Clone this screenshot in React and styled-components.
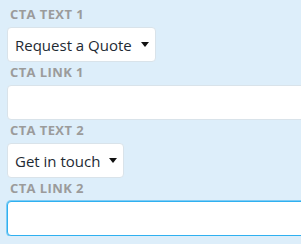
import React from "react";
import styled, { createGlobalStyle } from "styled-components";

const Global = createGlobalStyle`
  html, body {
    margin: 0;
    padding: 0;
    background: #ddeefa;
    overflow: hidden;
  }
  body {
    font-family: "Open Sans", "Noto Sans", sans-serif;
  }
`;

export default function App() {
  return (
    <Wrapper>
      <Global />
      <Field>
        <Label>CTA Text 1</Label>
        <Select>
          <span>Request a Quote</span>
          <Caret />
        </Select>
      </Field>
      <Field>
        <Label>CTA Link 1</Label>
        <Input />
      </Field>
      <Field>
        <Label>CTA Text 2</Label>
        <Select>
          <span>Get in touch</span>
          <Caret />
        </Select>
      </Field>
      <Field>
        <Label>CTA Link 2</Label>
        <Input focused />
      </Field>
    </Wrapper>
  );
}

const Wrapper = styled.div`
  width: 340px;
  padding: 6px 0 0 7px;
  display: flex;
  flex-direction: column;
  gap: 2px;
`;
const Field = styled.div`
  display: flex;
  flex-direction: column;
  align-items: flex-start;
`;
const Label = styled.label`
  font-size: 13px;
  font-weight: 700;
  line-height: 17px;
  letter-spacing: 0.4px;
  color: #9b9b9b;
  text-transform: uppercase;
  padding-left: 3px;
  margin-bottom: 4px;
`;
const Select = styled.div`
  display: inline-flex;
  align-items: center;
  gap: 9px;
  height: 35px;
  box-sizing: border-box;
  padding: 0 6px 0 7px;
  background: #fff;
  border: 1px solid #d9e3ea;
  border-radius: 4px;
  font-size: 15px;
  color: #1e2a33;
`;
const Caret = styled.i`
  width: 0;
  height: 0;
  border-left: 4px solid transparent;
  border-right: 4px solid transparent;
  border-top: 5px solid #111;
`;
const Input = styled.div`
  width: 100%;
  height: 35px;
  box-sizing: border-box;
  background: #fff;
  border: 1px solid ${(p) => (p.focused ? "#2fb0f0" : "#d9e3ea")};
  box-shadow: ${(p) => (p.focused ? "0 0 0 1px rgba(47,176,240,0.55)" : "none")};
  border-radius: 4px;
`;
